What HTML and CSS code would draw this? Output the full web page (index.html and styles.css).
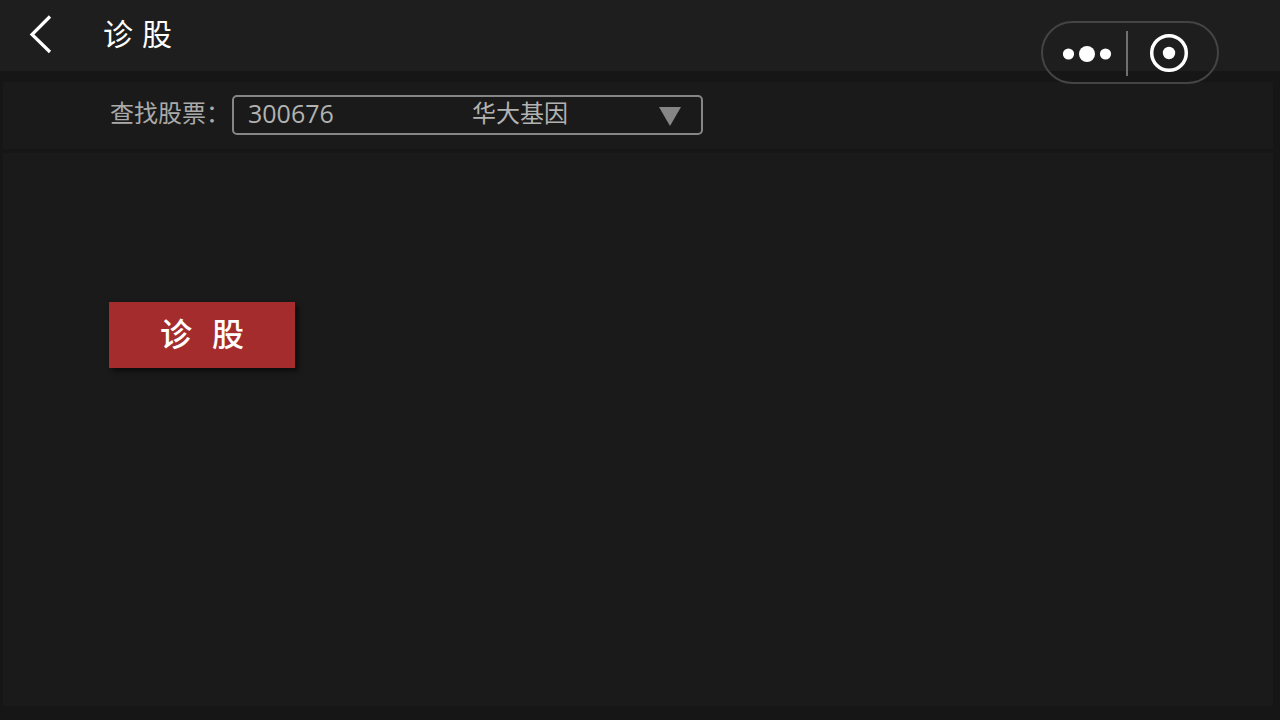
FILE: index.html
```html
<!DOCTYPE html>
<html lang="zh-CN">
<head>
<meta charset="utf-8">
<meta name="viewport" content="width=device-width, initial-scale=1">
<title>诊股</title>
<link rel="stylesheet" href="styles.css">
</head>
<body>
<header class="topbar">
  <button class="back" type="button" aria-label="返回">
    <svg width="24" height="40" viewBox="0 0 24 40"><path d="M22 2.500 4 20.500 22 38" fill="none" stroke="#fff" stroke-width="3.200"/></svg>
  </button>
  <h1 class="title"><span>诊</span><span>股</span></h1>
  <div class="capsule">
    <button class="capsule-more" type="button" aria-label="更多">
      <svg width="50" height="20" viewBox="0 0 50 20" fill="#fff"><circle cx="6.500" cy="10" r="5.600"/><circle cx="25" cy="10" r="8"/><circle cx="43.500" cy="10" r="5.600"/></svg>
    </button>
    <button class="capsule-close" type="button" aria-label="关闭">
      <svg width="40" height="40" viewBox="0 0 40 40"><circle cx="20" cy="20" r="17.300" fill="none" stroke="#fff" stroke-width="3.500"/><circle cx="20" cy="20" r="6.200" fill="#fff"/></svg>
    </button>
  </div>
</header>
<main class="content">
  <section class="panel search">
    <label class="search-label" for="stock">查找股票：</label>
    <div class="picker">
      <select class="picker-select" id="stock"><option>300676</option></select>
      <output class="picker-name" for="stock">华大基因</output>
      <svg class="picker-arrow" width="22" height="19" viewBox="0 0 22 19"><path d="M0 0h22L11 19z" fill="#868686"/></svg>
    </div>
  </section>
  <section class="panel result">
    <button class="diagnose" type="button"><span>诊</span><span>股</span></button>
  </section>
</main>
</body>
</html>
```
FILE: styles.css
```css
* {
  box-sizing: border-box;
}

body {
  margin: 0;
  min-height: 100vh;
  display: flex;
  flex-direction: column;
  background: #161616;
  color: #fff;
  font-family: "Noto Sans", "Noto Sans CJK SC", sans-serif;
}

button {
  border: 0;
  padding: 0;
  background: none;
  color: inherit;
  font-family: inherit;
  cursor: pointer;
}

svg {
  display: block;
}

.topbar {
  position: relative;
  display: flex;
  align-items: center;
  height: 71px;
  padding: 0 28px 3px;
  background: #1e1e1e;
}

.title {
  display: flex;
  gap: 9px;
  margin: 0 0 0 51px;
  font-size: 30px;
  font-weight: 400;
  line-height: 40px;
}

.capsule {
  position: absolute;
  top: 21px;
  right: 61px;
  display: grid;
  grid-template-columns: 85px 1fr;
  align-items: center;
  width: 178px;
  height: 63px;
  padding: 8px 0 6px;
  border: 2px solid #444;
  border-radius: 32px;
}

.capsule-more {
  display: flex;
  align-items: center;
  height: 45px;
  padding-left: 19px;
  border-right: 2px solid #707070;
}

.capsule-close {
  padding: 0 0 2px 21px;
}

.content {
  flex: 1;
  display: flex;
  flex-direction: column;
  gap: 4px;
  padding: 11px 7px 14px 3px;
}

.panel {
  background: #1a1a1a;
}

.search {
  display: flex;
  padding: 13px 107px 14px;
}

.search-label {
  flex: none;
  width: 122px;
  color: #aaa;
  font-size: 24px;
  line-height: 36px;
}

.picker {
  display: grid;
  grid-template-columns: 238px 1fr auto;
  flex: 0 1 471px;
  height: 40px;
  border: 2px solid #868686;
  border-radius: 5px;
  color: #b2b2b2;
  line-height: 32px;
}

.picker-select {
  grid-area: 1 / 1 / 2 / 4;
  appearance: none;
  padding: 0 14px 6px;
  border: 0;
  background: transparent;
  color: inherit;
  font: 25px/32px "Open Sans", "Noto Sans CJK SC", sans-serif;
}

.picker-name {
  grid-area: 1 / 2;
  font-size: 24px;
  pointer-events: none;
}

.picker-arrow {
  grid-area: 1 / 3;
  margin: 10px 20px 0 0;
  pointer-events: none;
}

.result {
  flex: 1;
  padding: 149px 106px;
}

.diagnose {
  display: flex;
  justify-content: center;
  align-items: center;
  gap: 20px;
  width: 186px;
  height: 66px;
  padding-bottom: 2px;
  background: #a52c2d;
  box-shadow: 3px 3px 5px rgba(0, 0, 0, 0.6);
  font-size: 32px;
  font-weight: 500;
  line-height: 40px;
}
```
